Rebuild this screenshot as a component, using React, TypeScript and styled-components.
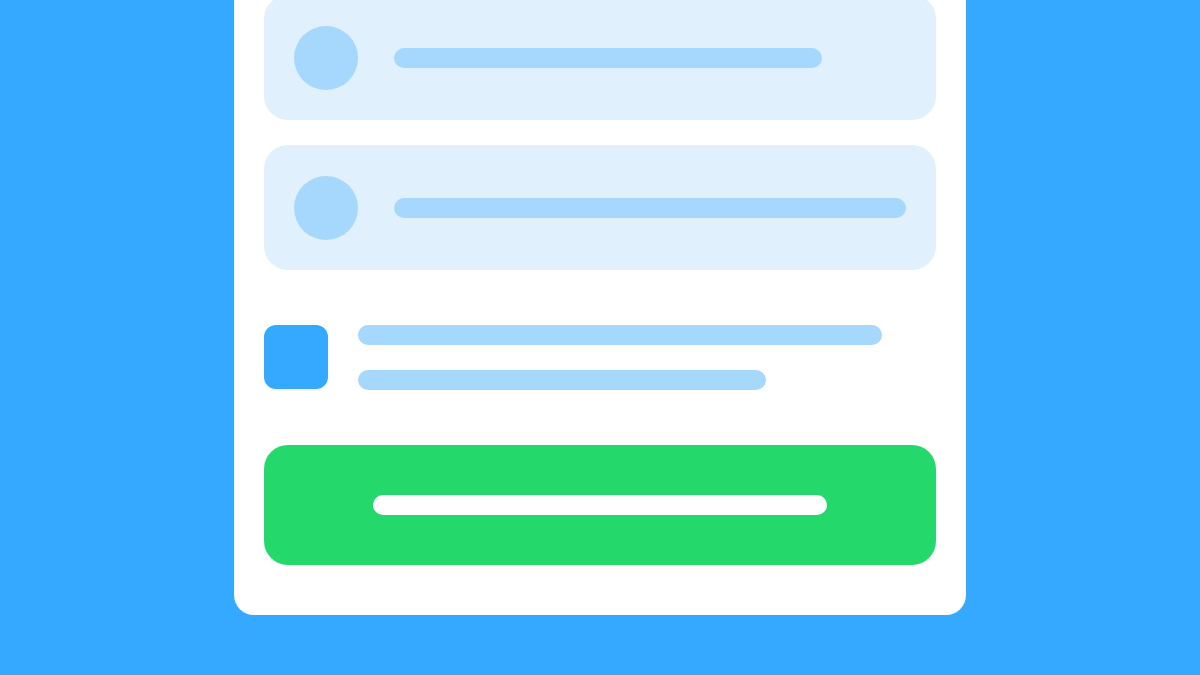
import styled, { createGlobalStyle } from "styled-components";

const GlobalStyle = createGlobalStyle`
  html, body {
    margin: 0;
    padding: 0;
    background: #35a9ff;
    font-family: "Inter", "Liberation Sans", sans-serif;
    overflow: hidden;
  }
`;

const Page = styled.div`
  width: 1200px;
  height: 675px;
  display: flex;
  justify-content: center;
  align-items: flex-end;
  background: #35a9ff;
  overflow: hidden;
`;

const Card = styled.div`
  width: 732px;
  margin-bottom: 60px;
  box-sizing: border-box;
  padding: 30px 30px 50px;
  background: #ffffff;
  border-radius: 20px;
  display: flex;
  flex-direction: column;
`;

const ListItem = styled.div`
  height: 125px;
  margin-bottom: 25px;
  box-sizing: border-box;
  padding: 0 30px;
  background: #e0f0fd;
  border-radius: 24px;
  display: flex;
  align-items: center;
  gap: 36px;
`;

const Avatar = styled.div`
  width: 64px;
  height: 64px;
  flex-shrink: 0;
  border-radius: 50%;
  background: #a6d8fd;
`;

const Bar = styled.div<{ $w: number; $color?: string }>`
  width: ${(p) => p.$w}px;
  height: 20px;
  border-radius: 10px;
  background: ${(p) => p.$color ?? "#a6d8fd"};
`;

const InfoRow = styled.div`
  margin-top: 30px;
  display: flex;
  align-items: flex-start;
  gap: 30px;
`;

const Icon = styled.div`
  width: 64px;
  height: 64px;
  border-radius: 12px;
  background: #35a9ff;
`;

const Lines = styled.div`
  display: flex;
  flex-direction: column;
  gap: 25px;
`;

const Button = styled.div`
  margin-top: 55px;
  height: 120px;
  border-radius: 24px;
  background: #24d86c;
  display: flex;
  align-items: center;
  justify-content: center;
`;

export default function App() {
  return (
    <>
      <GlobalStyle />
      <Page>
        <Card>
          <ListItem>
            <Avatar />
            <Bar $w={428} />
          </ListItem>
          <ListItem>
            <Avatar />
            <Bar $w={512} />
          </ListItem>
          <InfoRow>
            <Icon />
            <Lines>
              <Bar $w={524} />
              <Bar $w={408} />
            </Lines>
          </InfoRow>
          <Button>
            <Bar $w={454} $color="#ffffff" />
          </Button>
        </Card>
      </Page>
    </>
  );
}
